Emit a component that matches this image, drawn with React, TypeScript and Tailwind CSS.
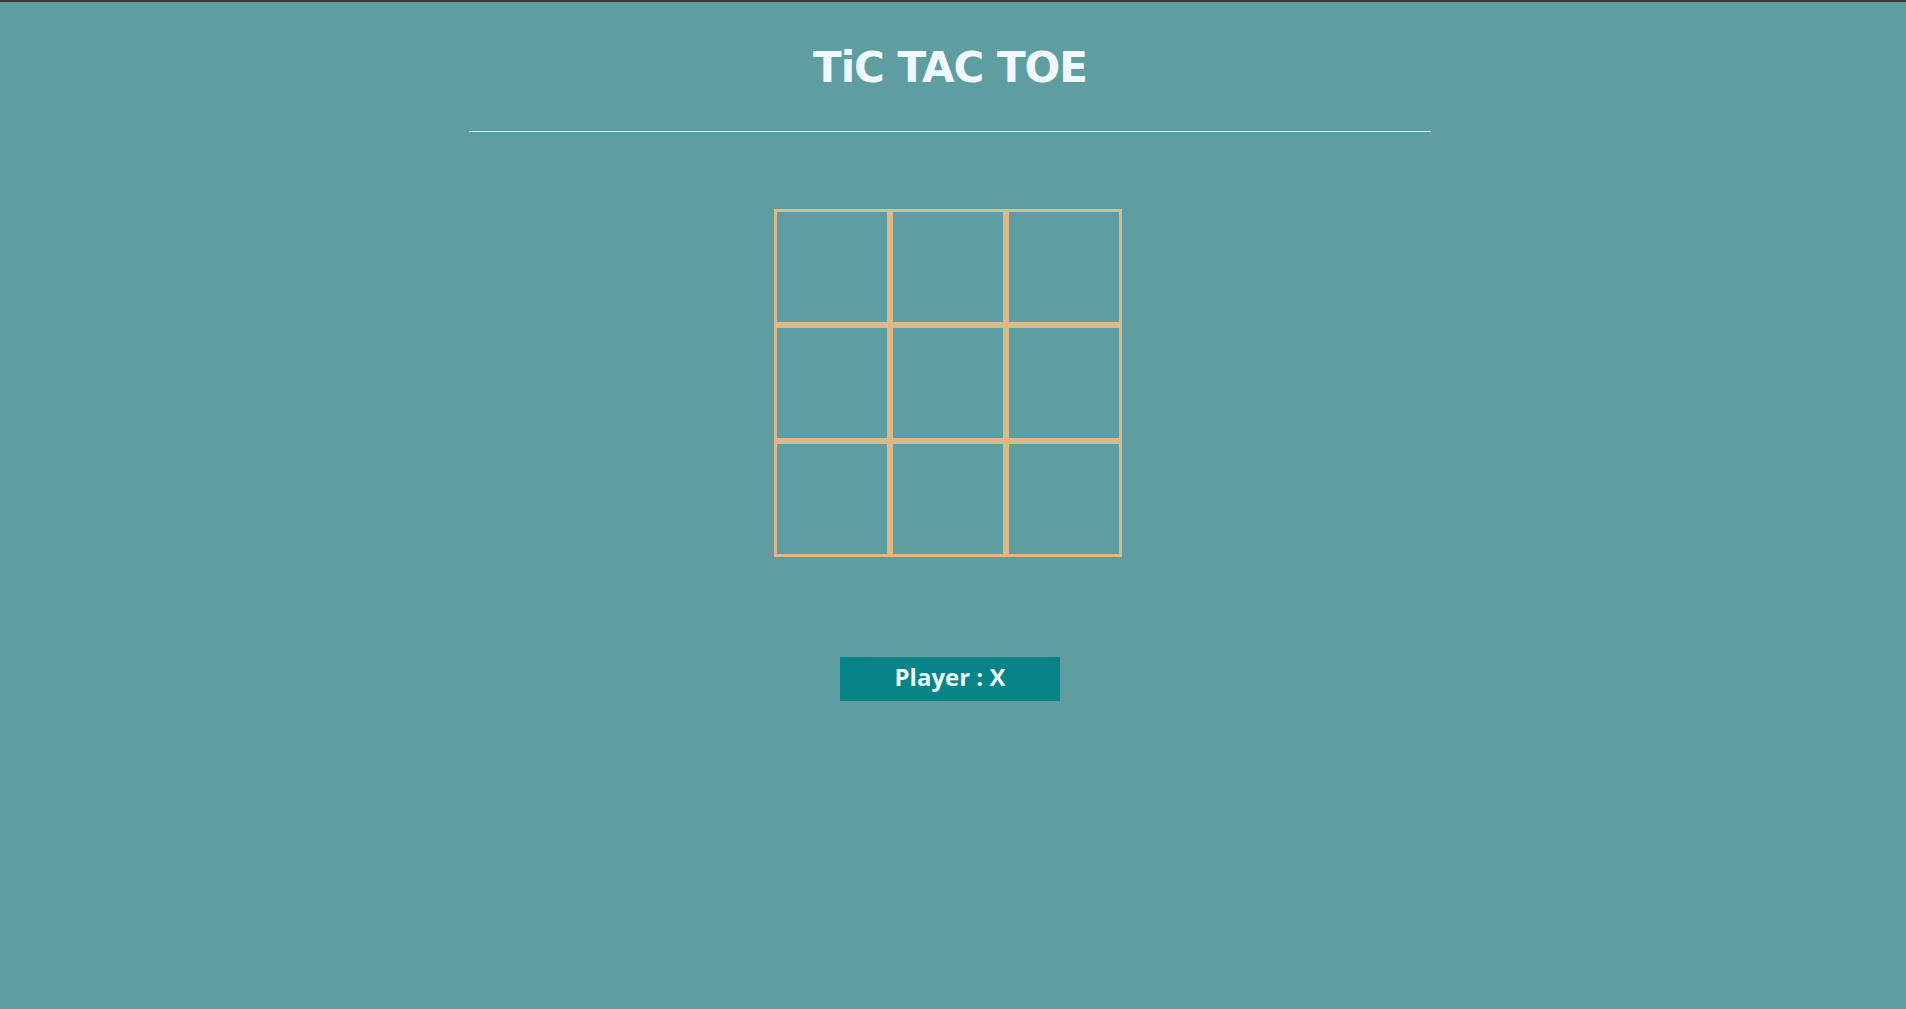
import { useState } from "react";

export default function App() {
  const [cells, setCells] = useState<string[]>(Array(9).fill(""));
  const [player, setPlayer] = useState("X");

  function play(i: number) {
    if (cells[i]) return;
    const next = [...cells];
    next[i] = player;
    setCells(next);
    setPlayer(player === "X" ? "O" : "X");
  }

  return (
    <div className="min-h-screen bg-[#5f9ea0] pb-10">
      <div className="h-[2px] bg-[#3b3b3b]" />

      <h1
        className="translate-x-[-3px] pt-[38px] text-center text-[42px] font-bold leading-[56px] tracking-[-1px] text-[#f0f8ff]"
        style={{ fontFamily: '"DejaVu Sans", sans-serif' }}
      >
        TiC TAC TOE
      </h1>

      <div className="mx-auto mt-[35px] h-px w-[962px] translate-x-[-3px] bg-[#e6eaea]" />

      <div className="mx-auto mt-[77px] grid w-[348px] translate-x-[-5px] grid-cols-3">
        {cells.map((c, i) => (
          <button
            key={i}
            onClick={() => play(i)}
            className="flex h-[116px] w-[116px] items-center justify-center border-[3px] border-[#deb887] text-5xl font-bold text-[#f0f8ff]"
          >
            {c}
          </button>
        ))}
      </div>

      <div
        className="mx-auto mt-[100px] flex h-[44px] w-[220px] translate-x-[-3px] items-center justify-center bg-[#068488] pb-[4px] text-[24px] font-bold text-[#f0f8ff]"
        style={{ fontFamily: '"Open Sans", sans-serif' }}
      >
        Player : {player}
      </div>
    </div>
  );
}
